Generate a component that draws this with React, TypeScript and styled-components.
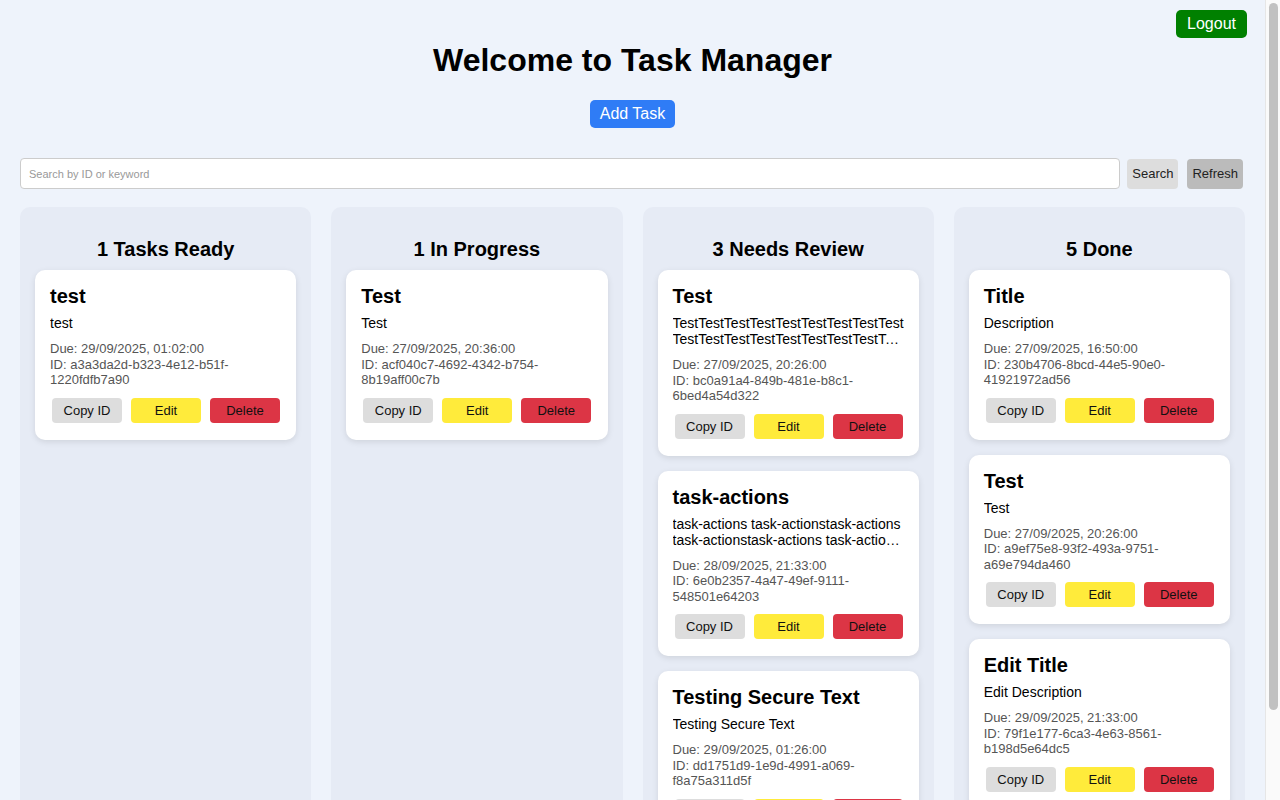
import React from "react";
import styled, { createGlobalStyle } from "styled-components";

const GlobalStyle = createGlobalStyle`
  html, body { margin: 0; padding: 0; }
  body {
    background: #eef3fb;
    font-family: "Liberation Sans", Arial, Helvetica, sans-serif;
    color: #000;
    padding-right: 15px;
  }
`;

const ScrollTrack = styled.div`
  position: fixed;
  top: 0;
  right: 0;
  bottom: 0;
  width: 15px;
  box-sizing: border-box;
  background: #fafafa;
  border-left: 1px solid #e6e6e6;
  padding: 3px 2px 0 3px;
`;

const ScrollThumb = styled.div`
  height: 707px;
  border-radius: 5px;
  background: #c1c1c1;
`;

const Page = styled.div`
  position: relative;
  padding: 0 20px 40px;
`;

const LogoutButton = styled.button`
  position: absolute;
  top: 10px;
  right: 18px;
  background: #008000;
  color: #fff;
  border: none;
  border-radius: 5px;
  font-family: inherit;
  font-size: 16px;
  height: 28px;
  padding: 0 11px;
  cursor: pointer;
`;

const Title = styled.h1`
  margin: 0;
  padding-top: 42px;
  font-size: 32px;
  line-height: 37px;
  font-weight: bold;
  text-align: center;
`;

const AddRow = styled.div`
  display: flex;
  justify-content: center;
  margin-top: 21px;
`;

const AddButton = styled.button`
  background: #2f7cf6;
  color: #fff;
  border: none;
  border-radius: 5px;
  font-family: inherit;
  font-size: 16px;
  height: 28px;
  padding: 0 10px;
`;

const SearchBar = styled.div`
  display: flex;
  align-items: center;
  margin-top: 30px;
  padding-right: 2px;
`;

const SearchInput = styled.input`
  flex: 1;
  height: 31px;
  box-sizing: border-box;
  border: 1px solid #ccc;
  border-radius: 4px;
  padding: 0 8px;
  margin-right: 7px;
  font-family: inherit;
  font-size: 11px;
  background: #fff;
  &::placeholder { color: #999; }
`;

const SmallButton = styled.button<{ $bg: string; $gapAfter?: number }>`
  background: ${(p) => p.$bg};
  border: none;
  border-radius: 4px;
  height: 30px;
  padding: 0 5px;
  margin-right: ${(p) => p.$gapAfter ?? 0}px;
  font-family: inherit;
  font-size: 13px;
  color: #222;
`;

const Board = styled.div`
  display: grid;
  grid-template-columns: repeat(4, 1fr);
  gap: 20px;
  margin-top: 18px;
  align-items: stretch;
`;

const Column = styled.section`
  background: #e6ebf5;
  border-radius: 10px;
  padding: 15px 15px 20px;
  display: flex;
  flex-direction: column;
  gap: 15px;
`;

const ColumnHeading = styled.h2`
  margin: 16px 0 -6px;
  font-size: 20px;
  line-height: 23px;
  text-align: center;
  font-weight: bold;
`;

const Card = styled.article`
  background: #fff;
  border-radius: 10px;
  padding: 15px 15px 17px;
  box-shadow: 0 2px 6px rgba(0, 0, 0, 0.1);
`;

const CardTitle = styled.h3`
  margin: 0 0 7px;
  font-size: 20px;
  line-height: 23px;
  font-weight: bold;
`;

const CardDesc = styled.p`
  margin: 0;
  font-size: 14px;
  line-height: 16px;
  display: -webkit-box;
  -webkit-line-clamp: 2;
  -webkit-box-orient: vertical;
  overflow: hidden;
  word-break: break-word;
`;

const Meta = styled.div`
  margin-top: 10px;
  font-size: 13px;
  line-height: 15.5px;
  color: #555;
`;

const Actions = styled.div`
  display: flex;
  gap: 9px;
  padding-left: 2px;
  margin-top: 10px;
`;

const ActionButton = styled.button<{ $bg: string }>`
  width: 70px;
  height: 25px;
  border: none;
  border-radius: 4px;
  background: ${(p) => p.$bg};
  font-family: inherit;
  font-size: 13px;
  color: #111;
`;

type Task = { title: string; desc: string; due: string; id: string };

const columns: { heading: string; tasks: Task[] }[] = [
  {
    heading: "1 Tasks Ready",
    tasks: [
      { title: "test", desc: "test", due: "29/09/2025, 01:02:00", id: "a3a3da2d-b323-4e12-b51f-1220fdfb7a90" },
    ],
  },
  {
    heading: "1 In Progress",
    tasks: [
      { title: "Test", desc: "Test", due: "27/09/2025, 20:36:00", id: "acf040c7-4692-4342-b754-8b19aff00c7b" },
    ],
  },
  {
    heading: "3 Needs Review",
    tasks: [
      {
        title: "Test",
        desc: "TestTestTestTestTestTestTestTestTest TestTestTestTestTestTestTestTestTestTestTest",
        due: "27/09/2025, 20:26:00",
        id: "bc0a91a4-849b-481e-b8c1-6bed4a54d322",
      },
      {
        title: "task-actions",
        desc: "task-actions task-actionstask-actions task-actionstask-actions task-actions task-actions",
        due: "28/09/2025, 21:33:00",
        id: "6e0b2357-4a47-49ef-9111-548501e64203",
      },
      {
        title: "Testing Secure Text",
        desc: "Testing Secure Text",
        due: "29/09/2025, 01:26:00",
        id: "dd1751d9-1e9d-4991-a069-f8a75a311d5f",
      },
    ],
  },
  {
    heading: "5 Done",
    tasks: [
      { title: "Title", desc: "Description", due: "27/09/2025, 16:50:00", id: "230b4706-8bcd-44e5-90e0-41921972ad56" },
      { title: "Test", desc: "Test", due: "27/09/2025, 20:26:00", id: "a9ef75e8-93f2-493a-9751-a69e794da460" },
      { title: "Edit Title", desc: "Edit Description", due: "29/09/2025, 21:33:00", id: "79f1e177-6ca3-4e63-8561-b198d5e64dc5" },
      { title: "Done Task", desc: "Done Task", due: "26/09/2025, 10:00:00", id: "5c2e8f1a-77b4-4c2d-9e3a-0f6d1b2c3a4e" },
      { title: "Final", desc: "Final", due: "25/09/2025, 09:15:00", id: "e1d2c3b4-a596-4877-8899-aabbccddeeff" },
    ],
  },
];

function TaskCard({ task }: { task: Task }) {
  return (
    <Card>
      <CardTitle>{task.title}</CardTitle>
      <CardDesc>{task.desc}</CardDesc>
      <Meta>
        <div>Due: {task.due}</div>
        <div>ID: {task.id}</div>
      </Meta>
      <Actions>
        <ActionButton $bg="#dddddd">Copy ID</ActionButton>
        <ActionButton $bg="#ffeb3b">Edit</ActionButton>
        <ActionButton $bg="#dc3545">Delete</ActionButton>
      </Actions>
    </Card>
  );
}

export default function App() {
  return (
    <>
      <GlobalStyle />
      <Page>
        <LogoutButton>Logout</LogoutButton>
        <Title>Welcome to Task Manager</Title>
        <AddRow>
          <AddButton>Add Task</AddButton>
        </AddRow>
        <SearchBar>
          <SearchInput placeholder="Search by ID or keyword" />
          <SmallButton $bg="#ddd" $gapAfter={9}>Search</SmallButton>
          <SmallButton $bg="#bbb">Refresh</SmallButton>
        </SearchBar>
        <Board>
          {columns.map((col) => (
            <Column key={col.heading}>
              <ColumnHeading>{col.heading}</ColumnHeading>
              {col.tasks.map((t) => (
                <TaskCard key={t.id} task={t} />
              ))}
            </Column>
          ))}
        </Board>
      </Page>
      <ScrollTrack aria-hidden>
        <ScrollThumb />
      </ScrollTrack>
    </>
  );
}
